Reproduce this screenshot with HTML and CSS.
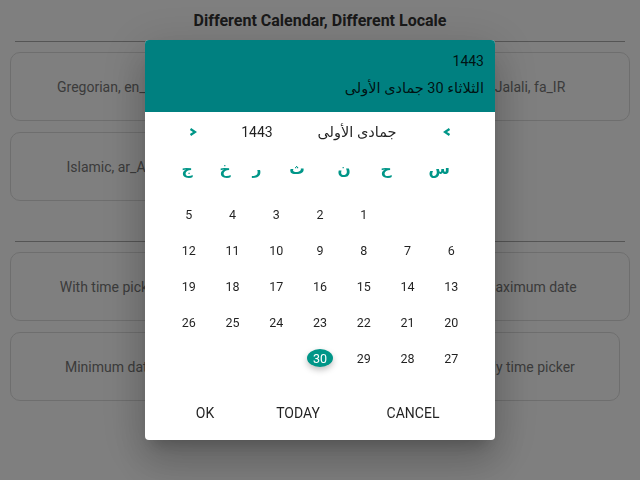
FILE: index.html
```html
<!DOCTYPE html>
<html lang="en">
<head>
<meta charset="utf-8">
<title>Different Calendar, Different Locale</title>
<link rel="stylesheet" href="styles.css">
</head>
<body>
<div class="page">
  <h1 class="title">Different Calendar, Different Locale</h1>
  <hr class="rule">
  <div class="cards">
    <div class="card">Gregorian, en_US</div>
    <div class="card">Persian, fa_IR</div>
    <div class="card">Jalali, fa_IR</div>
    <div class="card">Islamic, ar_AE</div>
    <div class="card">Islamic, en_US</div>
  </div>
  <hr class="rule rule-2">
  <div class="cards">
    <div class="card">With time picker</div>
    <div class="card">Disabled days</div>
    <div class="card">Maximum date</div>
    <div class="card">Minimum date</div>
    <div class="card">Range picker</div>
    <div class="card card-narrow">Only time picker</div>
  </div>
</div>

<div class="overlay">
  <div class="dialog">
    <div class="dlg-head" dir="rtl">
      <div class="head-year">1443</div>
      <div class="head-date">الثلاثاء 30 جمادى الأولى</div>
    </div>
    <div class="nav">
      <span class="chev">
        <svg width="8" height="8" viewBox="0 0 8 8"><path d="M1.5 1 L6 4 L1.5 7" fill="none" stroke="currentColor" stroke-width="2.2" stroke-linejoin="miter"/></svg>
      </span>
      <span class="nav-year">1443</span>
      <span class="nav-month" dir="rtl">جمادى الأولى</span>
      <span class="chev chev-r">
        <svg width="8" height="8" viewBox="0 0 8 8"><path d="M6.5 1 L2 4 L6.5 7" fill="none" stroke="currentColor" stroke-width="2.2" stroke-linejoin="miter"/></svg>
      </span>
    </div>
    <div class="weekdays" dir="rtl">
      <span>س</span><span>ح</span><span>ن</span><span>ث</span><span>ر</span><span>خ</span><span>ج</span>
    </div>
    <div class="days" dir="rtl">
      <span></span><span></span>
      <span>1</span><span>2</span><span>3</span><span>4</span><span>5</span>
      <span>6</span><span>7</span><span>8</span><span>9</span><span>10</span><span>11</span><span>12</span>
      <span>13</span><span>14</span><span>15</span><span>16</span><span>17</span><span>18</span><span>19</span>
      <span>20</span><span>21</span><span>22</span><span>23</span><span>24</span><span>25</span><span>26</span>
      <span>27</span><span>28</span><span>29</span><span><b class="sel">30</b></span>
    </div>
    <div class="actions">
      <button class="btn btn-ok">OK</button>
      <button class="btn btn-today">TODAY</button>
      <button class="btn btn-cancel">CANCEL</button>
    </div>
  </div>
</div>
</body>
</html>
```

FILE: styles.css
```css
* { box-sizing: border-box; }
html, body { margin: 0; padding: 0; }
body {
  font-family: Roboto, "DejaVu Sans", sans-serif;
  background: #fff;
  width: 640px;
  height: 480px;
  overflow: hidden;
}
.page { padding-top: 11px; }
.title {
  margin: 0;
  text-align: center;
  font-size: 16px;
  line-height: 20px;
  font-weight: 700;
  color: #333;
}
.rule {
  margin: 10px 15px 0;
  border: 0;
  border-top: 1px solid #aaa;
  height: 0;
}
.rule-2 { margin-top: 40px; }
.cards {
  display: grid;
  grid-template-columns: repeat(3, 200px);
  column-gap: 10px;
  row-gap: 11px;
  padding: 0 10px;
  margin-top: 10px;
}
.card {
  height: 69px;
  border: 1px solid #ddd;
  border-radius: 10px;
  display: flex;
  align-items: center;
  justify-content: center;
  font-size: 14px;
  color: #777;
}
.card-narrow { margin-right: 10px; }

.overlay {
  position: fixed;
  inset: 0;
  background: rgba(0, 0, 0, 0.5);
  display: flex;
  align-items: center;
  justify-content: center;
}
.dialog {
  width: 350px;
  height: 400px;
  background: #fff;
  border-radius: 4px;
  overflow: hidden;
  box-shadow: 0 11px 15px -7px rgba(0,0,0,.2), 0 24px 38px 3px rgba(0,0,0,.14), 0 9px 46px 8px rgba(0,0,0,.12);
  color: rgba(0,0,0,.87);
}
.dlg-head {
  height: 72px;
  background: #008080;
  padding: 10px 11px 0;
  font-size: 14px;
  color: rgba(0,0,0,.87);
}
.head-year { line-height: 22px; }
.head-date { line-height: 22px; margin-top: 6px; font-size: 14.5px; }

.nav {
  height: 40px;
  display: flex;
  align-items: center;
  padding-left: 38px;
  font-size: 14px;
}
.chev {
  width: 20px;
  display: flex;
  justify-content: center;
  color: #009688;
}
.nav-year { width: 40px; margin-left: 34px; text-align: center; }
.nav-month { width: 100px; margin-left: 30px; text-align: center; font-size: 14.5px; }
.chev-r { margin-left: 30px; }

.weekdays {
  height: 34px;
  display: flex;
  align-items: center;
  font-size: 15.5px;
  font-weight: 700;
  color: #009688;
}
.weekdays span { width: 20px; text-align: center; }
.weekdays span:nth-child(1) { margin-right: 45px; }
.weekdays span:nth-child(2) { margin-right: 34px; }
.weekdays span:nth-child(3) { margin-right: 22px; }
.weekdays span:nth-child(4) { margin-right: 27px; }
.weekdays span:nth-child(5) { margin-right: 20px; }
.weekdays span:nth-child(6) { margin-right: 12px; }
.weekdays span:nth-child(7) { margin-right: 18px; }

.days {
  display: grid;
  grid-template-columns: repeat(7, 1fr);
  grid-auto-rows: 36px;
  padding: 0 22px;
  margin-top: 10px;
  font-size: 12.5px;
}
.days span {
  display: flex;
  align-items: center;
  justify-content: center;
}
.sel {
  font-weight: 400;
  width: 26px;
  height: 18px;
  border-radius: 50%;
  background: #009688;
  color: #fff;
  display: flex;
  align-items: center;
  justify-content: center;
  box-shadow: 0 3px 6px rgba(0,0,0,.25);
}

.actions {
  display: flex;
  padding: 19px 0 9px 30px;
}
.btn {
  height: 36px;
  border: 0;
  background: transparent;
  font-family: Roboto, sans-serif;
  font-size: 14px;
  color: rgba(0,0,0,.87);
  padding: 0;
}
.btn-ok { width: 60px; }
.btn-today { width: 80px; margin-left: 23px; }
.btn-cancel { width: 90px; margin-left: 30px; }
```
